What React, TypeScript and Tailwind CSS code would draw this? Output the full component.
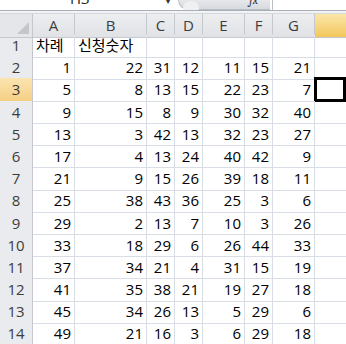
const cols = ['A', 'B', 'C', 'D', 'E', 'F', 'G']

const rows: number[][] = [
  [1, 22, 31, 12, 11, 15, 21],
  [5, 8, 13, 15, 22, 23, 7],
  [9, 15, 8, 9, 30, 32, 40],
  [13, 3, 42, 13, 32, 23, 27],
  [17, 4, 13, 24, 40, 42, 9],
  [21, 9, 15, 26, 39, 18, 11],
  [25, 38, 43, 36, 25, 3, 6],
  [29, 2, 13, 7, 10, 3, 26],
  [33, 18, 29, 6, 26, 44, 33],
  [37, 34, 21, 4, 31, 15, 19],
  [41, 35, 38, 21, 19, 27, 18],
  [45, 34, 26, 13, 5, 29, 6],
  [49, 21, 16, 3, 6, 29, 18],
]

const gridCols = 'grid grid-cols-[33px_42px_72px_28px_28px_42px_28px_42px_1fr]'

function RowHeader({ n, active }: { n: number; active?: boolean }) {
  return (
    <div
      className={
        'flex items-center justify-center border-r border-b border-[#c5c9cf] text-[15px] ' +
        (active
          ? 'bg-gradient-to-b from-[#fbe4b0] to-[#f5cf83] text-[#3a3a3a]'
          : 'bg-[#e9ebee] text-[#3d3d3d]')
      }
    >
      {n}
    </div>
  )
}

export default function App() {
  return (
    <div
      className="w-[346px] h-[344px] overflow-hidden bg-white"
      style={{ fontFamily: '"Open Sans", "Noto Sans CJK KR", sans-serif' }}
    >
      {/* formula bar (cut off at the top) */}
      <div className="flex h-[10px] overflow-hidden bg-white">
        <div className="w-[178px] flex items-end justify-between pl-[70px] pr-[8px]">
          <span className="text-[15px] leading-none text-[#222] -mb-[1px] translate-y-[-5px]">H3</span>
          <span className="text-[8px] leading-none text-[#333] mb-[5px]">▾</span>
        </div>
        <div className="w-[92px] rounded-bl-[14px] bg-gradient-to-b from-[#e6e8eb] to-[#d7dadf] border-l border-b border-[#b9bec5] flex items-end justify-between pl-[4px] pr-[12px]">
          <div className="w-[16px] h-[14px] rounded-full bg-[#eef0f2] mb-[-6px]" />
          <span className="italic font-serif text-[12px] leading-none text-[#333] mb-[3px]">fx</span>
        </div>
        <div className="flex-1 ml-[2px] border-l border-[#b9bec5] bg-white" />
      </div>
      <div className="h-[1px] bg-[#a9afb8]" />
      <div className="h-[3px] bg-[#f1f3f5] border-b border-[#d4d8dd]" />

      {/* column headers */}
      <div className={gridCols + ' h-[20px]'}>
        <div className="relative border-r border-b border-[#c5c9cf] bg-[#e4e6e9]">
          <div className="absolute right-[3px] bottom-[3px] w-0 h-0 border-l-[12px] border-l-transparent border-b-[12px] border-b-[#c3c6ca]" />
        </div>
        {cols.map((c) => (
          <div
            key={c}
            className="flex items-center justify-center border-r border-b border-[#c5c9cf] bg-gradient-to-b from-[#eceef0] to-[#e0e2e5] text-[15px] text-[#3d3d3d]"
          >
            {c}
          </div>
        ))}
        <div className="border-b border-[#c5c9cf] bg-gradient-to-b from-[#fae6a8] to-[#f3c658]" />
      </div>

      {/* row 1 */}
      <div className={gridCols + ' h-[22.2px]'}>
        <RowHeader n={1} />
        <div className="flex items-center pl-[3px] border-r border-b border-[#d9dee6] text-[15px] text-black">차례</div>
        <div className="flex items-center pl-[3px] border-r border-b border-[#d9dee6] text-[15px] text-black">신청숫자</div>
        {[0, 1, 2, 3, 4].map((i) => (
          <div key={i} className="border-r border-b border-[#d9dee6]" />
        ))}
        <div className="border-b border-[#d9dee6]" />
      </div>

      {rows.map((r, ri) => (
        <div key={ri} className={gridCols + ' h-[22.2px]'}>
          <RowHeader n={ri + 2} active={ri === 1} />
          {r.map((v, ci) => (
            <div
              key={ci}
              className="flex items-center justify-end pr-[3px] border-r border-b border-[#d9dee6] text-[15px] text-black"
            >
              {v}
            </div>
          ))}
          {ri === 1 ? (
            <div className="border-[3px] border-black -mt-[1px] -ml-[1px]" />
          ) : (
            <div className="border-b border-[#d9dee6]" />
          )}
        </div>
      ))}
    </div>
  )
}
